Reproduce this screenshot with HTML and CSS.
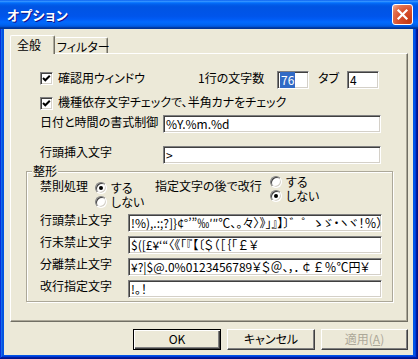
FILE: index.html
```html
<!DOCTYPE html>
<html lang="ja">
<head>
    <meta charset="UTF-8">
    <title>オプション</title>
    <link rel="stylesheet" href="styles.css">
</head>
<body>
    <div class="window">
        <div class="titlebar">
            <span class="title">オプション</span>
            <div class="close-button">
                <svg width="19" height="19" viewBox="0 0 19 19"><path d="M5.5 5.5 L13.5 13.5 M13.5 5.5 L5.5 13.5" stroke="#fff" stroke-width="2.2" stroke-linecap="square"/></svg>
            </div>
        </div>
        <div class="client">
            <div class="tabs">
                <div class="tab tab-active">全般</div>
                <div class="tab tab-filter">フィルター</div>
            </div>
            <div class="tab-panel">
                <div class="row row-first">
                    <span class="checkbox"><svg width="11" height="11" viewBox="0 0 11 11"><polyline points="2,5 4.3,7.3 8.8,2.8" fill="none" stroke="#000" stroke-width="2"/></svg></span>
                    <span class="label label-check">確認用ウィンドウ</span>
                    <span class="label label-cols">1行の文字数</span>
                    <div class="field field-small"><span class="selected">76</span></div>
                    <span class="label label-tab">タブ</span>
                    <div class="field field-small">4</div>
                </div>
                <div class="row row-second">
                    <span class="checkbox"><svg width="11" height="11" viewBox="0 0 11 11"><polyline points="2,5 4.3,7.3 8.8,2.8" fill="none" stroke="#000" stroke-width="2"/></svg></span>
                    <span class="label label-check2">機種依存文字チェックで、半角カナをチェック</span>
                </div>
                <div class="row row-date">
                    <span class="label label-wide">日付と時間の書式制御</span>
                    <div class="field field-wide">%Y.%m.%d</div>
                </div>
                <div class="row row-insert">
                    <span class="label label-wide">行頭挿入文字</span>
                    <div class="field field-wide">&gt;</div>
                </div>

                <div class="group">
                    <div class="group-title">整形</div>
                    <div class="kinsoku">
                        <span class="label k-label">禁則処理</span>
                        <div class="radio-group radio-group-left">
                            <div class="radio-item"><span class="radio"><span class="dot"></span></span>する</div>
                            <div class="radio-item"><span class="radio"></span>しない</div>
                        </div>
                        <span class="label k-label2">指定文字の後で改行</span>
                        <div class="radio-group">
                            <div class="radio-item"><span class="radio"></span>する</div>
                            <div class="radio-item"><span class="radio"><span class="dot"></span></span>しない</div>
                        </div>
                    </div>
                    <div class="char-grid">
                        <span class="label">行頭禁止文字</span>
                        <div class="field">!%),.:;?]}¢°’”‰′″℃、。々〉》」』】〕゛゜ゝゞ・ヽヾ！％），．：；？］｝</div>
                        <span class="label">行末禁止文字</span>
                        <div class="field">$([£¥‘“〈《「『【〔＄（［｛｢￡￥</div>
                        <span class="label">分離禁止文字</span>
                        <div class="field">¥?|$@.0%0123456789￥＄＠、，．￠￡％℃円￥</div>
                        <span class="label">改行指定文字</span>
                        <div class="field">!。！</div>
                    </div>
                </div>
            </div>
            <div class="buttons">
                <div class="button button-default">OK</div>
                <div class="button">キャンセル</div>
                <div class="button button-disabled">適用(<u>A</u>)</div>
            </div>
        </div>
    </div>
</body>
</html>
```

FILE: styles.css
```css
/* Basic reset */
* {
    margin: 0;
    padding: 0;
    box-sizing: border-box;
}

body {
    width: 418px;
    height: 359px;
    overflow: hidden;
    font-family: "Noto Sans CJK JP", "Noto Sans", sans-serif;
    font-size: 12px;
    font-feature-settings: "palt";
    color: #000;
}

.window {
    width: 418px;
    height: 359px;
    display: flex;
    flex-direction: column;
    background-color: #0055e5;
    box-shadow: inset -1px -1px #00138c, inset 1px 1px #0831d9,
        inset -2px -2px #001ea0, inset 2px 2px #166aee,
        inset -3px -3px #003bda, inset 3px 3px #0855dd;
}

/* Title bar */
.titlebar {
    height: 29px;
    flex: none;
    display: flex;
    align-items: center;
    justify-content: space-between;
    padding: 0 5px 0 7px;
    background: linear-gradient(to bottom, #0058ee 0%, #3a93ff 4%, #288eff 6%, #127dff 8%, #036ffc 10%, #0262ee 14%, #0057e5 20%, #0054e3 24%, #0055eb 56%, #005bf5 66%, #026afe 76%, #0062ef 86%, #0052d6 92%, #0040ab 94%, #003092 100%);
}

.title {
    color: #fff;
    font-weight: bold;
    font-size: 13px;
    letter-spacing: 0.5px;
    text-shadow: 1px 1px #0f1089;
}

.close-button {
    width: 21px;
    height: 21px;
    border: 1px solid #fff;
    border-radius: 3px;
    display: flex;
    align-items: center;
    justify-content: center;
    background: radial-gradient(circle at 85% 85%, #c43a14 0%, #d9512f 50%, #e2714f 75%, #f2b29c 100%);
}

/* Client area */
.client {
    flex: 1;
    margin: 0 5px 4px 4px;
    background-color: #ece9d8;
    padding: 6px 5px 0 6px;
}

.tabs {
    display: flex;
    align-items: flex-end;
    height: 18px;
}

.tab {
    height: 16px;
    background-color: #ece9d8;
    border: 1px solid;
    border-color: #fff #716f64 transparent #fff;
    border-bottom: none;
    border-radius: 2px 2px 0 0;
    line-height: 14px;
    padding-top: 1px;
    white-space: nowrap;
}

.tab-active {
    width: 45px;
    height: 19px;
    margin-bottom: -1px;
    padding-left: 6px;
    padding-top: 2px;
    position: relative;
    z-index: 1;
    box-shadow: inset -1px 0 #aca899;
}

.tab-filter {
    width: 53px;
    padding-left: 2px;
    padding-top: 2px;
    border-left: none;
    box-shadow: inset -1px 0 #aca899;
}

.tab-panel {
    height: 269px;
    border: 1px solid;
    border-color: #fff #716f64 #716f64 #fff;
    box-shadow: inset -1px -1px #aca899;
    padding: 17px 0 0 29px;
}

/* Rows */
.row {
    display: flex;
    align-items: flex-start;
}

.label {
    line-height: 14px;
    white-space: nowrap;
}

.row-first {
    height: 18px;
}

.row-second {
    height: 15px;
    margin-top: 7px;
}

.row-date {
    height: 18px;
    margin-top: 4px;
}

.row-insert {
    height: 18px;
    margin-top: 13px;
}

.row-insert .label {
    line-height: 12px;
}

.label-check {
    width: 140px;
}

.label-check2 {
    margin-top: -1px;
}

.label-cols {
    width: 79px;
}

.label-tab {
    width: 29px;
    margin-left: 9px;
}

.label-wide {
    width: 123px;
}

/* Checkbox */
.checkbox {
    width: 13px;
    height: 13px;
    margin: 1px 5px 0 0;
    border: 1px solid;
    border-color: #808080 #fff #fff #808080;
    box-shadow: inset 1px 1px #404040, inset -1px -1px #d4d0c8;
    background-color: #fff;
    display: flex;
    align-items: center;
    justify-content: center;
}

/* Edit fields */
.field {
    height: 18px;
    border: 1px solid;
    border-color: #808080 #fff #fff #808080;
    box-shadow: inset 1px 1px #404040, inset -1px -1px #d4d0c8;
    background-color: #fff;
    padding: 0 2px;
    line-height: 16px;
    white-space: nowrap;
    overflow: hidden;
}

.field-small {
    width: 32px;
}

.field-wide {
    width: 218px;
}

.selected {
    background-color: #316ac5;
    color: #fff;
    padding: 0 1px;
}

/* Group box */
.group {
    width: 367px;
    margin: 7px 0 0 -14px;
    border: 1px solid #aca899;
    box-shadow: 1px 1px 0 #fff, inset 1px 1px 0 #fff;
    padding: 0 0 3px 13px;
}

.group-title {
    width: fit-content;
    margin: -7px 0 -2px -8px;
    padding: 0 1px;
    line-height: 12px;
    background-color: #ece9d8;
}

.kinsoku {
    display: flex;
    align-items: flex-start;
    height: 34px;
}

.k-label {
    width: 55px;
    margin-top: 4px;
}

.k-label2 {
    width: 115px;
    margin-top: 4px;
}

.radio-group-left {
    width: 60px;
    margin-top: 6px;
}

.radio-item {
    display: flex;
    align-items: center;
    gap: 4px;
    height: 14px;
    line-height: 14px;
    white-space: nowrap;
}

.radio {
    width: 12px;
    height: 12px;
    border-radius: 50%;
    border: 1px solid;
    border-color: #808080 #fff #fff #808080;
    box-shadow: inset 1px 1px #404040, inset -1px -1px #d4d0c8;
    background-color: #fff;
    display: flex;
    align-items: center;
    justify-content: center;
}

.dot {
    width: 4px;
    height: 4px;
    border-radius: 50%;
    background-color: #000;
}

.char-grid {
    display: grid;
    grid-template-columns: 88px 254px;
    grid-auto-rows: 18px;
    row-gap: 4px;
    margin-top: 5px;
}

.char-grid .label {
    line-height: 12px;
}

/* Buttons */
.buttons {
    display: flex;
    justify-content: flex-end;
    gap: 6px;
    margin-top: 7px;
}

.button {
    width: 88px;
    height: 21px;
    border: 1px solid;
    border-color: #fff #404040 #404040 #fff;
    box-shadow: inset -1px -1px #808080;
    background-color: #ece9d8;
    text-align: center;
    line-height: 18px;
}

.button-default {
    border-color: #000;
    box-shadow: inset 1px 1px #fff, inset -1px -1px #404040, inset -2px -2px #808080;
}

.button-disabled {
    width: 87px;
    color: #aca899;
}
```
